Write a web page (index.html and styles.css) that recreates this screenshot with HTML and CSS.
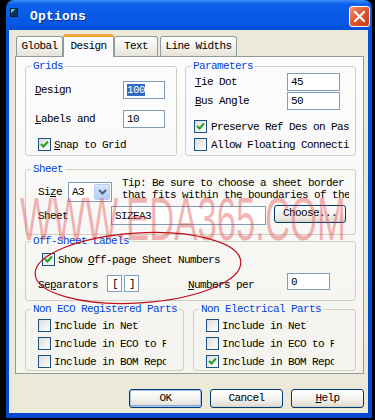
FILE: index.html
```html
<!DOCTYPE html>
<html lang="en">
<head>
  <meta charset="UTF-8">
  <title>Options</title>
  <link rel="stylesheet" href="styles.css">
</head>
<body>

  <!-- Dialog window -->
  <div class="window">
    <div class="titlebar">
      <span class="app-icon"></span>
      <span class="title">Options</span>
      <span class="close">
        <svg width="13" height="13" viewBox="0 0 13 13"><path d="M2 2 L11 11 M11 2 L2 11" stroke="#fff" stroke-width="2.2" stroke-linecap="round"/></svg>
      </span>
    </div>

    <div class="client">
      <div class="tabs">
        <div class="tab tab-global">Global</div>
        <div class="tab tab-design active">Design</div>
        <div class="tab tab-text">Text</div>
        <div class="tab tab-widths">Line Widths</div>
      </div>

      <div class="panel">
        <div class="top-row">
          <fieldset class="group grids">
            <legend>Grids</legend>
            <div class="group-body">
              <div class="field-row">
                <span class="lbl"><u>D</u>esign</span>
                <span class="input"><span class="sel">100</span></span>
              </div>
              <div class="field-row second">
                <span class="lbl"><u>L</u>abels and</span>
                <span class="input">10</span>
              </div>
              <div class="check-row snap">
                <span class="cb checked"><svg width="11" height="11" viewBox="0 0 11 11"><path d="M2 5 L4.5 7.5 L9 2.5" fill="none" stroke="#21A121" stroke-width="2"/></svg></span>
                <span class="cb-text"><u>S</u>nap to Grid</span>
              </div>
            </div>
          </fieldset>

          <fieldset class="group params">
            <legend>Parameters</legend>
            <div class="group-body">
              <div class="field-row">
                <span class="lbl"><u>T</u>ie Dot</span>
                <span class="input">45</span>
              </div>
              <div class="field-row second">
                <span class="lbl"><u>B</u>us Angle</span>
                <span class="input">50</span>
              </div>
              <div class="check-row first">
                <span class="cb checked"><svg width="11" height="11" viewBox="0 0 11 11"><path d="M2 5 L4.5 7.5 L9 2.5" fill="none" stroke="#21A121" stroke-width="2"/></svg></span>
                <span class="cb-text">Preserve Ref Des on Paste</span>
              </div>
              <div class="check-row next">
                <span class="cb"></span>
                <span class="cb-text">Allow Floating Connections</span>
              </div>
            </div>
          </fieldset>
        </div>

        <fieldset class="group sheet">
          <legend>Sheet</legend>
          <div class="group-body">
            <div class="size-row">
              <span class="lbl">Si<u>z</u>e</span>
              <span class="combo">
                <span class="combo-val">A3</span>
                <span class="combo-btn"><svg width="9" height="6" viewBox="0 0 9 6"><path d="M1 1 L4.5 4.5 L8 1" fill="none" stroke="#4D6185" stroke-width="2"/></svg></span>
              </span>
              <span class="tip">Tip: Be sure to choose a sheet border
that fits within the boundaries of the workspace.</span>
            </div>
            <div class="name-row">
              <span class="lbl">Sheet</span>
              <span class="input">SIZEA3</span>
              <span class="btn">Choose...</span>
            </div>
          </div>
        </fieldset>

        <fieldset class="group offsheet">
          <legend>Off-Sheet Labels</legend>
          <div class="group-body">
            <div class="check-row">
              <span class="cb checked"><svg width="11" height="11" viewBox="0 0 11 11"><path d="M2 5 L4.5 7.5 L9 2.5" fill="none" stroke="#21A121" stroke-width="2"/></svg></span>
              <span class="cb-text">Show <u>O</u>ff-page Sheet Numbers</span>
            </div>
            <div class="sep-row">
              <span class="lbl">Se<u>p</u>arators</span>
              <span class="input small">[</span>
              <span class="input small">]</span>
              <span class="lbl numbers"><u>N</u>umbers per</span>
              <span class="input">0</span>
            </div>
          </div>
        </fieldset>

        <div class="bottom-row">
          <fieldset class="group parts eco">
            <legend>Non ECO Registered Parts</legend>
            <div class="group-body">
              <div class="check-row"><span class="cb"></span><span class="cb-text short">Include in Netlist</span></div>
              <div class="check-row"><span class="cb"></span><span class="cb-text">Include in ECO to PCB</span></div>
              <div class="check-row"><span class="cb"></span><span class="cb-text">Include in BOM Report</span></div>
            </div>
          </fieldset>
          <fieldset class="group parts elec">
            <legend>Non Electrical Parts</legend>
            <div class="group-body">
              <div class="check-row"><span class="cb"></span><span class="cb-text short">Include in Netlist</span></div>
              <div class="check-row"><span class="cb"></span><span class="cb-text">Include in ECO to PCB</span></div>
              <div class="check-row"><span class="cb checked"><svg width="11" height="11" viewBox="0 0 11 11"><path d="M2 5 L4.5 7.5 L9 2.5" fill="none" stroke="#21A121" stroke-width="2"/></svg></span><span class="cb-text">Include in BOM Report</span></div>
            </div>
          </fieldset>
        </div>
      </div>

      <div class="buttons">
        <span class="btn default">OK</span>
        <span class="btn">Cancel</span>
        <span class="btn"><u>H</u>elp</span>
      </div>
    </div>
  </div>

  <!-- Watermark and hand drawn mark over the dialog -->
  <div class="watermark">WWW.EDA365.COM</div>
  <svg class="scribble" width="375" height="420" viewBox="0 0 375 420">
    <ellipse cx="138" cy="268" rx="103" ry="35" transform="rotate(-3.5 138 268)" fill="none" stroke="#C0101A" stroke-width="1.2"/>
  </svg>

</body>
</html>
```

FILE: styles.css
```css
/* General */
* {
  box-sizing: border-box;
}

html, body {
  margin: 0;
  padding: 0;
}

body {
  position: relative;
  width: 375px;
  height: 420px;
  overflow: hidden;
  background-color: #000;
  color: #000;
  font-family: "Liberation Mono", "DejaVu Sans Mono", monospace;
  font-size: 11px;
  letter-spacing: -0.6px;
  line-height: 12px;
}

u {
  text-decoration: underline;
  text-underline-offset: 1px;
}

/* Window frame */
.window {
  margin-left: 6px;
  width: 366px;
  height: 418px;
  padding: 0 4px 5px 3px;
  border-radius: 8px 8px 0 0;
  background: linear-gradient(#3A8DFB 0, #0C61EB 4px, #0758E3 22px, #0050DA 30px, #0248D2 100%);
  display: flex;
  flex-direction: column;
}

.titlebar {
  height: 30px;
  display: flex;
  align-items: flex-start;
}

.app-icon {
  width: 8px;
  height: 9px;
  margin: 8px 0 0 1px;
  background: linear-gradient(135deg, #2FD0E8 0 35%, #0E3350 35%);
  border: 1px solid #0A1A30;
}

.title {
  margin: 9px 0 0 12px;
  color: #fff;
  font-size: 13px;
  font-weight: bold;
  letter-spacing: 0.2px;
  line-height: 16px;
  text-shadow: 1px 1px 0 #0A2F8C;
}

.close {
  margin: 6px -2px 0 auto;
  width: 21px;
  height: 21px;
  border: 1px solid #fff;
  border-radius: 3px;
  background: linear-gradient(135deg, #F09577 0, #E05A32 45%, #C43A15 100%);
  display: flex;
  align-items: center;
  justify-content: center;
}

.client {
  flex: 1;
  background-color: #ECE9D8;
  padding: 4px 4px 0 6px;
}

/* Tabs */
.tabs {
  height: 22px;
  margin-left: 1px;
  display: flex;
  align-items: flex-end;
}

.tab {
  height: 20px;
  border: 1px solid #919B9C;
  border-bottom: none;
  border-radius: 3px 3px 0 0;
  background: linear-gradient(#FFFFFF, #F0EFEA 60%, #E4E2D9);
  text-align: center;
  line-height: 18px;
}

.tab-global { width: 47px; }
.tab-design { width: 51px; }
.tab-text { width: 44px; }
.tab-widths { width: 77px; margin-left: 2px; }

.tab.active {
  position: relative;
  z-index: 1;
  height: 23px;
  margin-bottom: -1px;
  border-top: 3px solid #F2A33A;
  background: #FCFCFE;
  line-height: 18px;
}

/* Tab panel */
.panel {
  width: 349px;
  height: 318px;
  border: 1px solid #919B9C;
  background: linear-gradient(#FCFCFE, #F4F3EE);
  padding: 3px 7px 0 9px;
}

.group {
  margin: 0;
  padding: 0;
  min-width: 0;
  border: 1px solid #D0D0BF;
  border-radius: 3px;
}

.group legend {
  margin-left: 5px;
  padding: 0 2px;
  color: #0046D5;
  line-height: 12px;
  white-space: nowrap;
}

.top-row {
  display: flex;
  gap: 8px;
}

.bottom-row {
  display: flex;
  gap: 9px;
  margin-top: 2px;
}

/* Controls */
.input {
  display: block;
  height: 18px;
  padding: 2px 0 0 3px;
  border: 1px solid #7F9DB9;
  background: #fff;
  line-height: 13px;
  white-space: pre;
}

.input .sel {
  background: #316AC5;
  color: #fff;
}

.cb {
  flex: none;
  width: 13px;
  height: 13px;
  border: 1px solid #1C5180;
  background: linear-gradient(135deg, #DCDCD7, #FFFFFF);
  display: flex;
  align-items: center;
  justify-content: center;
}

.check-row {
  display: flex;
  align-items: center;
  height: 13px;
}

.cb-text {
  margin-left: 3px;
  white-space: nowrap;
  overflow: hidden;
}

.field-row {
  display: flex;
  align-items: center;
  height: 18px;
}

.btn {
  display: block;
  height: 19px;
  border: 1px solid #003C74;
  border-radius: 3px;
  background: linear-gradient(#FFFFFF, #F3F2EE 50%, #E6E3DA 85%, #D6D0C5);
  text-align: center;
  line-height: 16px;
}

/* Grids */
.grids {
  width: 152px;
  height: 96px;
}

.grids .group-body { padding: 9px 0 0 9px; }
.grids .lbl { width: 88px; }
.grids .input { width: 42px; }
.grids .second { margin-top: 11px; }
.grids .snap { margin: 10px 0 0 3px; }

/* Parameters */
.params {
  width: 171px;
  height: 96px;
}

.params .group-body { padding: 1px 0 0 9px; }
.params .lbl { width: 92px; }
.params .input { width: 53px; }
.params .second { margin-top: 1px; }
.params .check-row { margin-left: -1px; }
.params .check-row.first { margin-top: 10px; }
.params .check-row.next { margin-top: 5px; }
.params .cb-text { margin-left: 4px; width: 138px; }

/* Sheet */
.sheet {
  height: 72px;
  margin-top: 7px;
}

.sheet .group-body { padding: 2px 0 0 12px; }

.size-row {
  display: flex;
  align-items: flex-start;
  height: 25px;
}

.size-row .lbl {
  width: 30px;
  margin-top: 9px;
}

.combo {
  width: 44px;
  height: 20px;
  margin-top: 5px;
  border: 1px solid #7F9DB9;
  background: #fff;
  display: flex;
  align-items: center;
  padding: 0 1px 0 3px;
}

.combo-val {
  flex: 1;
}

.combo-btn {
  width: 16px;
  height: 16px;
  border: 1px solid #B9CEF7;
  border-radius: 2px;
  background: linear-gradient(#D8E5FD, #B4CBF7);
  display: flex;
  align-items: center;
  justify-content: center;
}

.tip {
  width: 227px;
  margin-left: 10px;
  white-space: pre;
  overflow: hidden;
}

.name-row {
  display: flex;
  align-items: flex-start;
  margin-top: 3px;
}

.name-row .lbl {
  width: 73px;
  margin-top: 5px;
}

.name-row .input {
  width: 155px;
  height: 19px;
  margin-top: 1px;
  padding-top: 3px;
}

.name-row .btn {
  width: 72px;
  height: 18px;
  margin-left: 8px;
  line-height: 15px;
}

/* Off-sheet labels */
.offsheet {
  height: 66px;
}

.offsheet .group-body { padding: 6px 0 0 12px; }

.offsheet .check-row {
  margin-left: 4px;
}

.sep-row {
  display: flex;
  align-items: flex-start;
  height: 19px;
  margin-top: 7px;
}

.sep-row .lbl {
  width: 69px;
  margin-top: 6px;
}

.sep-row .input.small {
  width: 15px;
  height: 17px;
  margin: 2px 2px 0 0;
  padding-left: 4px;
}

.sep-row .lbl.numbers {
  width: 99px;
  margin-left: 47px;
}

.sep-row .input {
  width: 43px;
  height: 17px;
}

/* Parts groups */
.parts {
  height: 68px;
}

.parts .group-body { padding: 4px 0 0 12px; }

.parts .check-row + .check-row {
  margin-top: 5px;
}

.eco { width: 159px; }
.elec { width: 163px; }

.parts .cb-text { width: 112px; }
.parts .cb-text.short { width: 86px; }

/* Bottom buttons */
.buttons {
  display: flex;
  justify-content: flex-end;
  gap: 8px;
  margin-top: 15px;
}

.buttons .btn {
  width: 73px;
}

.buttons .btn.default {
  box-shadow: inset 0 0 0 1px #A9C4EF, inset 0 -1px 0 1px #8AA7E0;
}

/* Overlay marks */
.watermark {
  position: absolute;
  left: 20px;
  top: 188px;
  font-family: "Liberation Sans", Arial, sans-serif;
  font-size: 62px;
  line-height: 62px;
  letter-spacing: 0;
  color: rgba(225, 60, 60, 0.38);
  white-space: nowrap;
  transform: scaleX(0.56);
  transform-origin: left top;
  pointer-events: none;
}

.scribble {
  position: absolute;
  left: 0;
  top: 0;
  pointer-events: none;
}
```
